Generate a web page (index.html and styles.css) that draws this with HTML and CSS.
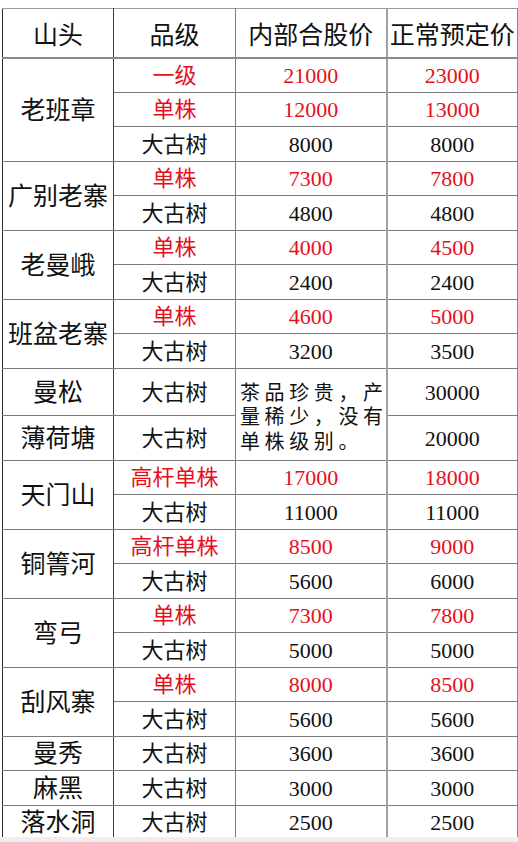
FILE: index.html
```html
<!DOCTYPE html>
<html lang="zh-CN">
<head>
<meta charset="utf-8">
<title>普洱茶价目表</title>
<link rel="stylesheet" href="styles.css">
</head>
<body>
<div class="sheet">
<table class="prices">
  <colgroup>
    <col class="c-hill"><col class="c-grade"><col class="c-inner"><col class="c-normal">
  </colgroup>
  <thead>
    <tr class="head">
      <th>山头</th><th>品级</th><th>内部合股价</th><th class="last">正常预定价</th>
    </tr>
  </thead>
  <tbody>
    <tr class="row red"><td class="hill" rowspan="3">老班章</td><td>一级</td><td class="num">21000</td><td class="num last">23000</td></tr>
    <tr class="row red"><td>单株</td><td class="num">12000</td><td class="num last">13000</td></tr>
    <tr class="row"><td>大古树</td><td class="num">8000</td><td class="num last">8000</td></tr>

    <tr class="row red"><td class="hill" rowspan="2">广别老寨</td><td>单株</td><td class="num">7300</td><td class="num last">7800</td></tr>
    <tr class="row"><td>大古树</td><td class="num">4800</td><td class="num last">4800</td></tr>

    <tr class="row red"><td class="hill" rowspan="2">老曼峨</td><td>单株</td><td class="num">4000</td><td class="num last">4500</td></tr>
    <tr class="row"><td>大古树</td><td class="num">2400</td><td class="num last">2400</td></tr>

    <tr class="row red"><td class="hill" rowspan="2">班盆老寨</td><td>单株</td><td class="num">4600</td><td class="num last">5000</td></tr>
    <tr class="row"><td>大古树</td><td class="num">3200</td><td class="num last">3500</td></tr>

    <tr class="row tall-a"><td class="hill">曼松</td><td>大古树</td><td class="note" rowspan="2">茶品珍贵，产<br>量稀少，没有<br>单株级别。</td><td class="num last">30000</td></tr>
    <tr class="row tall-b"><td class="hill">薄荷塘</td><td>大古树</td><td class="num last">20000</td></tr>

    <tr class="row red"><td class="hill" rowspan="2">天门山</td><td>高杆单株</td><td class="num">17000</td><td class="num last">18000</td></tr>
    <tr class="row"><td>大古树</td><td class="num">11000</td><td class="num last">11000</td></tr>

    <tr class="row red"><td class="hill" rowspan="2">铜箐河</td><td>高杆单株</td><td class="num">8500</td><td class="num last">9000</td></tr>
    <tr class="row"><td>大古树</td><td class="num">5600</td><td class="num last">6000</td></tr>

    <tr class="row red"><td class="hill" rowspan="2">弯弓</td><td>单株</td><td class="num">7300</td><td class="num last">7800</td></tr>
    <tr class="row"><td>大古树</td><td class="num">5000</td><td class="num last">5000</td></tr>

    <tr class="row red"><td class="hill" rowspan="2">刮风寨</td><td>单株</td><td class="num">8000</td><td class="num last">8500</td></tr>
    <tr class="row"><td>大古树</td><td class="num">5600</td><td class="num last">5600</td></tr>

    <tr class="row"><td class="hill">曼秀</td><td>大古树</td><td class="num">3600</td><td class="num last">3600</td></tr>
    <tr class="row"><td class="hill">麻黑</td><td>大古树</td><td class="num">3000</td><td class="num last">3000</td></tr>
    <tr class="row"><td class="hill">落水洞</td><td>大古树</td><td class="num">2500</td><td class="num last">2500</td></tr>
  </tbody>
</table>
</div>
</body>
</html>
```
FILE: styles.css
```css
html {
  background: #efefef;
}
body {
  margin: 0;
}
.sheet {
  background: #fff;
  height: 837px;
  overflow: hidden;
  padding: 8px 0 0 2px;
  box-sizing: border-box;
}
.prices {
  border-collapse: collapse;
  table-layout: fixed;
  width: 515px;
  font-family: "Liberation Serif", "Noto Sans CJK SC", serif;
  color: #111;
}
.c-hill { width: 111px; }
.c-grade { width: 122px; }
.c-inner { width: 151px; }
.c-normal { width: 131px; }

.prices th,
.prices td {
  box-sizing: border-box;
  border: 1px solid #7c7c7c;
  padding: 2px 0 0 0;
  line-height: 24px;
  text-align: center;
  vertical-align: middle;
  white-space: nowrap;
  overflow: hidden;
}
.prices th:first-child,
.prices td.hill {
  border-left: 1px solid #2a2a2a;
  border-right: 1px solid #3a3a3a;
}
.prices th.last,
.prices td.last {
  border-left: 2px solid #a0a0a0;
  border-right: 1px solid #8a8a8a;
}
.prices .head th {
  height: 49px;
  font-weight: normal;
  font-size: 25px;
  padding-top: 6px;
  border-top: 1px solid #9a9a9a;
  border-bottom: 2px solid #8a8a8a;
}
.prices td {
  font-size: 22px;
}
.prices td.hill {
  font-size: 25px;
  color: #111;
}
.row {
  height: 34.5px;
}
.row.tall-a {
  height: 47.5px;
}
.row.tall-b {
  height: 44.5px;
}
.row.red td {
  color: #e5101c;
}
.row.red td.hill {
  color: #111;
}
.prices td.note {
  font-size: 20px;
  line-height: 24.5px;
  letter-spacing: 4.6px;
  text-align: left;
  padding: 7px 0 0 4px;
  color: #111;
  border-right: 1px solid #7c7c7c;
}
```
